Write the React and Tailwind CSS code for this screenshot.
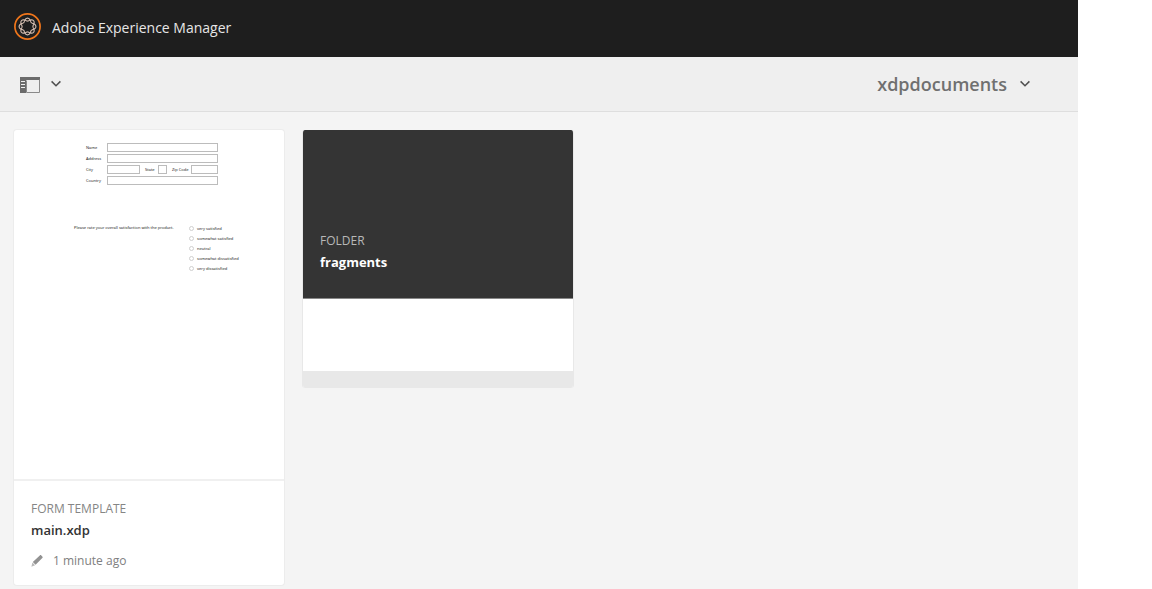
import React from "react";

function Chevron() {
  return (
    <svg width="12" height="8" viewBox="0 0 12 8" fill="none" stroke="#505050" strokeWidth="1.5" aria-hidden="true">
      <path d="M1.6 1.4 6 5.8l4.4-4.4" />
    </svg>
  );
}

function wave(sign) {
  const points = Array.from({ length: 96 }, (_, i) => {
    const a = (i * Math.PI) / 48;
    const r = 6.9 + sign * 1.5 * Math.cos(4 * a);
    return `${(13.5 + r * Math.cos(a)).toFixed(2)} ${(13.5 + r * Math.sin(a)).toFixed(2)}`;
  });
  return `M${points.join("L")}Z`;
}

function Logo() {
  return (
    <svg width="28" height="30" viewBox="0 0 28 30" fill="none" aria-hidden="true">
      <circle cx="13.5" cy="13.5" r="12.6" stroke="#f0761b" strokeWidth="1.7" />
      <path d={wave(1)} stroke="#d3bdb0" strokeWidth="1.1" />
      <path d={wave(-1)} stroke="#d3bdb0" strokeWidth="1.1" />
    </svg>
  );
}

function RailIcon() {
  return (
    <svg width="20" height="18" viewBox="0 -2 20 18" aria-hidden="true">
      <path fill="#6b6b6b" d="M0 0h20v3H0zM0 3h6v13H0z" />
      <path fill="none" stroke="#8a8a8a" d="M6.500 3.500v12h13v-13" />
      <path fill="#efefef" d="M1 4h4v1H1zM1 7h4v1H1zM1 10h4v1H1z" />
    </svg>
  );
}

function Pencil() {
  return (
    <svg width="12" height="12" viewBox="0 0 12 12" aria-hidden="true">
      <path fill="#929292" d="M8.8.4c.5-.5 1-.5 1.5 0l1 1c.5.5.5 1 0 1.5L4.6 9.7 1.8 7z" />
      <path fill="#b8b8b8" d="M1.4 7.5 4.1 10.2.4 11.700z" />
    </svg>
  );
}

const field = "block h-[9px] min-w-0 border border-[#bcbcbc] bg-white";

function FormPreview() {
  const choices = ["very satisfied", "somewhat satisfied", "neutral", "somewhat dissatisfied", "very dissatisfied"];
  return (
    <form className="h-[349px] pt-[13px] font-['Noto_Sans',sans-serif] text-[4px] leading-[9px] text-[#222]">
      <div className="ml-[72px] grid w-[132px] grid-cols-[21px_111px] gap-y-[2px]">
        <label htmlFor="name">Name</label>
        <input id="name" className={field} />
        <label htmlFor="address">Address</label>
        <input id="address" className={field} />
        <label htmlFor="city">City</label>
        <div className="flex">
          <input id="city" className={`${field} w-[33px]`} />
          <label htmlFor="state" className="w-[18px] pl-[5px]">State</label>
          <input id="state" className={`${field} w-[9px]`} />
          <label htmlFor="zip" className="w-[24px] pl-[5px]">Zip Code</label>
          <input id="zip" className={`${field} w-[27px]`} />
        </div>
        <label htmlFor="country">Country</label>
        <input id="country" className={field} />
      </div>
      <fieldset className="mt-[38px] ml-[60px] flex">
        <div id="question" className="w-[115px] whitespace-nowrap">
          Please rate your overall satisfaction with the product.
        </div>
        <div className="flex flex-col" role="radiogroup" aria-labelledby="question">
          {choices.map((c) => (
            <label key={c} className="flex h-[10px] items-center gap-[3px] whitespace-nowrap">
              <input type="radio" name="rating" className="size-[5px] appearance-none rounded-full border border-[#cfcfcf]" />
              {c}
            </label>
          ))}
        </div>
      </fieldset>
    </form>
  );
}

export default function App() {
  return (
    <div className="mr-[74px] flex min-h-screen flex-col bg-[#f4f4f4] font-['Open_Sans','Noto_Sans',sans-serif]">
      <header className="flex h-[57px] items-center gap-[10px] bg-[#1e1e1e] px-[14px] pb-[2px] text-[#e6e6e6]">
        <Logo />
        <span className="text-[14px] leading-5">Adobe Experience Manager</span>
      </header>
      <nav className="flex h-[55px] items-center justify-between border-b border-[#dedede] bg-[#efefef] pr-[47px] pl-5">
        <button type="button" aria-label="Toggle side panel" className="flex items-center gap-[10px]">
          <RailIcon />
          <Chevron />
        </button>
        <button type="button" className="flex items-center gap-3 text-[18px] leading-6 font-semibold text-[#707070]">
          xdpdocuments
          <Chevron />
        </button>
      </nav>
      <main className="flex flex-wrap items-start gap-[18px] px-[14px] pt-[18px]">
        <article className="w-[270px] overflow-hidden rounded-[3px] bg-white shadow-[0_0_0_1px_#ececec]">
          <FormPreview />
          <div className="border-t-2 border-[#f0f0f0] px-[17px] pt-[18px] pb-[13px]">
            <p className="text-[12px] leading-[20px] text-[#858585]">FORM TEMPLATE</p>
            <h2 className="text-[13px] leading-[22px] font-semibold text-[#333]">main.xdp</h2>
            <p className="mt-[9px] flex items-center gap-[10px] text-[12px] leading-[22px] text-[#808080]">
              <Pencil />
              1 minute ago
            </p>
          </div>
        </article>
        <article className="w-[272px] overflow-hidden rounded-[3px] border-x border-[#e8e8e8] bg-white">
          <div className="flex h-[169px] flex-col justify-end border-b border-[#888] bg-[#343434] px-[17px] pb-[25px]">
            <p className="text-[12px] leading-[20px] text-[#b8b8b8]">FOLDER</p>
            <h2 className="text-[13px] leading-[22px] font-bold text-white">fragments</h2>
          </div>
          <div className="h-[72px]" />
          <div className="h-[17px] bg-[#e8e8e8]" />
        </article>
      </main>
    </div>
  );
}
